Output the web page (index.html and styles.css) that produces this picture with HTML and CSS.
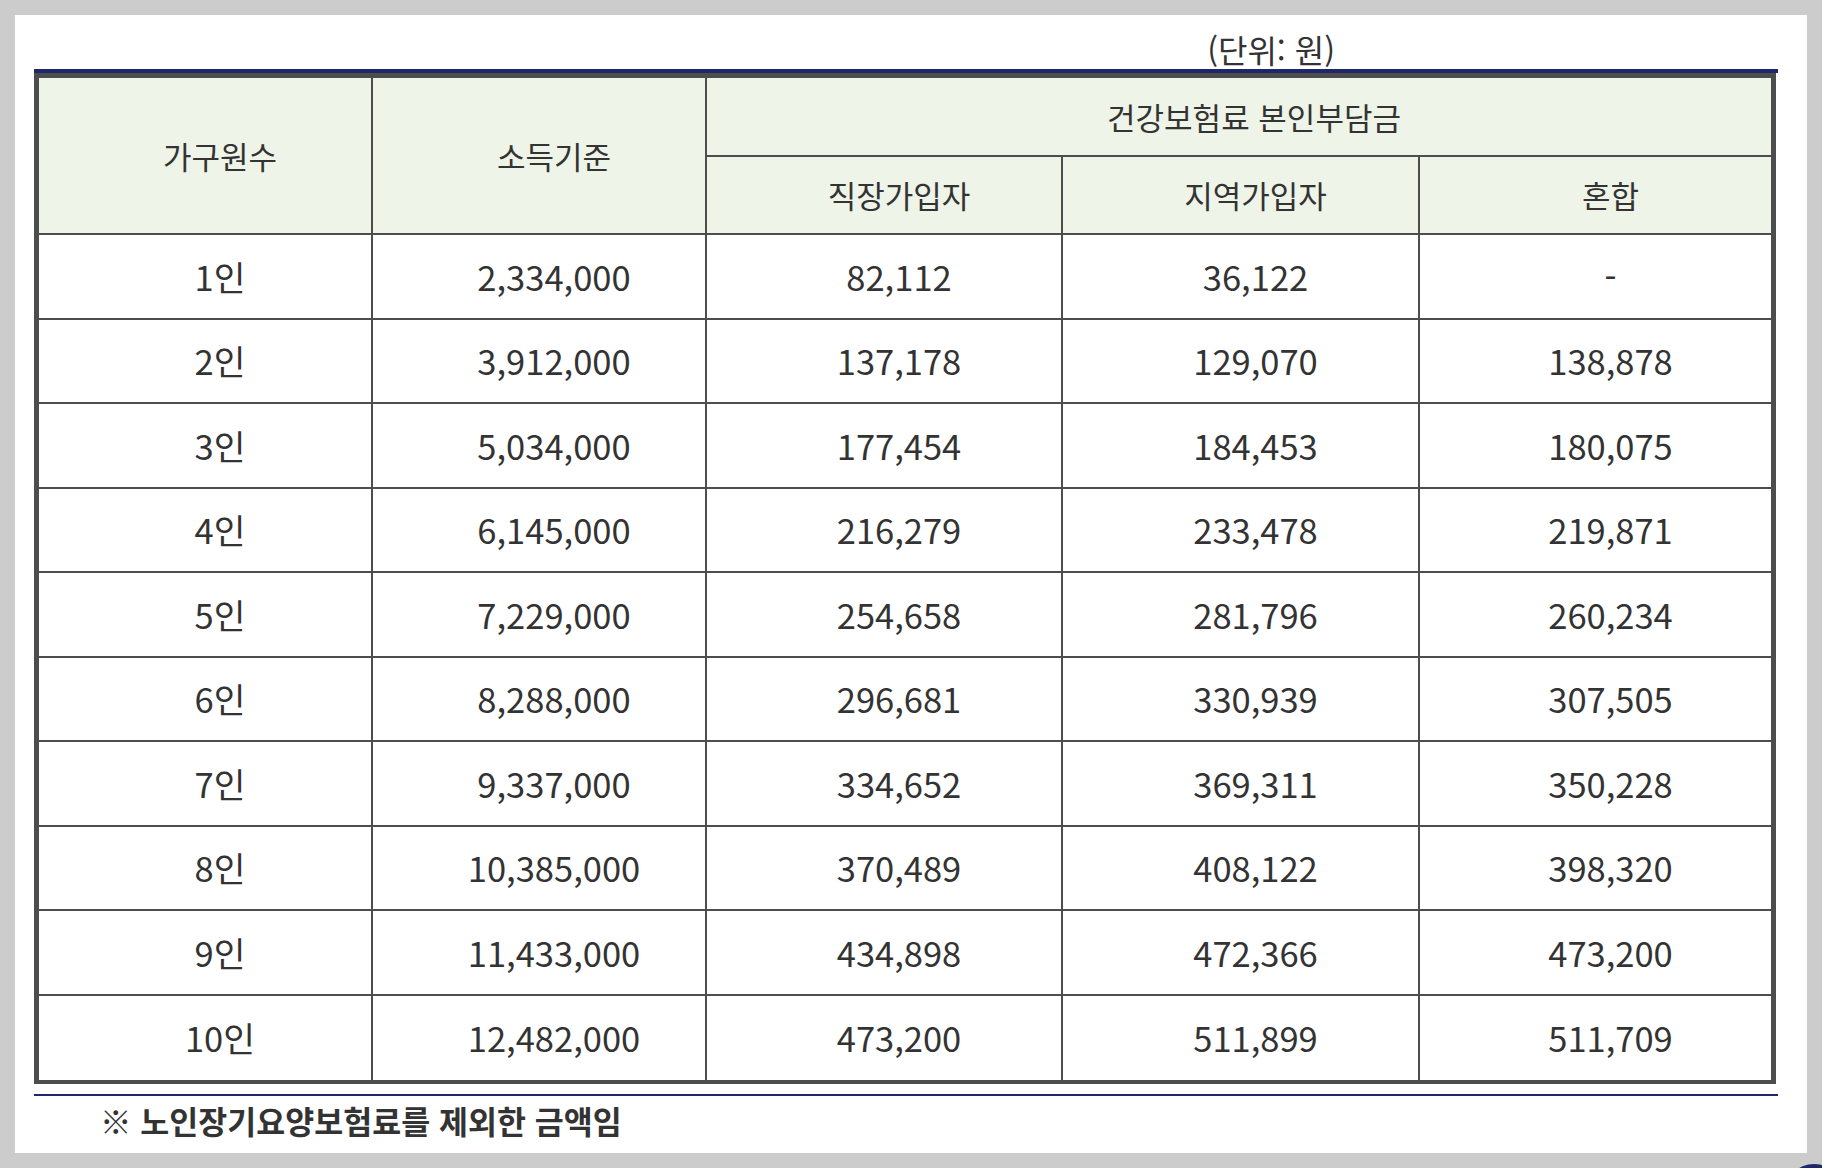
FILE: index.html
```html
<!DOCTYPE html>
<html lang="ko">
<head>
<meta charset="utf-8">
<title>건강보험료 본인부담금</title>
<link rel="stylesheet" href="styles.css">
</head>
<body>
<div class="page">
  <div class="unit">(단위: 원)</div>
  <div class="table-wrap">
    <table class="fee">
      <colgroup>
        <col class="c1"><col class="c2"><col class="c3"><col class="c4"><col class="c5">
      </colgroup>
      <thead>
        <tr class="h1">
          <th rowspan="2">가구원수</th>
          <th rowspan="2">소득기준</th>
          <th colspan="3" class="last">건강보험료 본인부담금</th>
        </tr>
        <tr class="h2">
          <th>직장가입자</th>
          <th>지역가입자</th>
          <th class="last">혼합</th>
        </tr>
      </thead>
      <tbody>
        <tr><td>1인</td><td>2,334,000</td><td>82,112</td><td>36,122</td><td class="last">-</td></tr>
        <tr><td>2인</td><td>3,912,000</td><td>137,178</td><td>129,070</td><td class="last">138,878</td></tr>
        <tr><td>3인</td><td>5,034,000</td><td>177,454</td><td>184,453</td><td class="last">180,075</td></tr>
        <tr><td>4인</td><td>6,145,000</td><td>216,279</td><td>233,478</td><td class="last">219,871</td></tr>
        <tr><td>5인</td><td>7,229,000</td><td>254,658</td><td>281,796</td><td class="last">260,234</td></tr>
        <tr><td>6인</td><td>8,288,000</td><td>296,681</td><td>330,939</td><td class="last">307,505</td></tr>
        <tr><td>7인</td><td>9,337,000</td><td>334,652</td><td>369,311</td><td class="last">350,228</td></tr>
        <tr><td>8인</td><td>10,385,000</td><td>370,489</td><td>408,122</td><td class="last">398,320</td></tr>
        <tr><td>9인</td><td>11,433,000</td><td>434,898</td><td>472,366</td><td class="last">473,200</td></tr>
        <tr><td>10인</td><td>12,482,000</td><td>473,200</td><td>511,899</td><td class="last">511,709</td></tr>
      </tbody>
    </table>
  </div>
  <p class="note">※ 노인장기요양보험료를 제외한 금액임</p>
</div>
<div class="fab"></div>
</body>
</html>
```

FILE: styles.css
```css
html, body {
  margin: 0;
  padding: 0;
}

body {
  background: #cccccc;
  font-family: "Noto Sans CJK KR", "Noto Sans", sans-serif;
  color: #333333;
  overflow: hidden;
  height: 1168px;
}

.page {
  box-sizing: border-box;
  width: 1792px;
  height: 1138px;
  margin: 15px 0 0 15px;
  padding: 14px 29px 0 19px;
  background: #ffffff;
}

.unit {
  height: 40px;
  line-height: 40px;
  font-size: 32px;
  text-align: right;
  padding-right: 443px;
  color: #333333;
}

.table-wrap {
  border-top: 4px solid #1f276b;
  border-bottom: 2px solid #1f276b;
  padding-bottom: 10px;
}

.fee {
  width: 1742px;
  table-layout: fixed;
  border-collapse: separate;
  border-spacing: 0;
  border: 5px solid #4d4d4d;
  border-bottom-width: 4px;
}

.c1 { width: 334px; }
.c2 { width: 334px; }
.c3 { width: 356px; }
.c4 { width: 357px; }
.c5 { width: 351px; }

.fee th,
.fee td {
  padding: 0 0 0 30px;
  text-align: center;
  vertical-align: middle;
  border-right: 2px solid #4d4d4d;
  border-bottom: 2px solid #4d4d4d;
  line-height: 1.2;
  color: #333333;
}

.fee th {
  background: #eef4e7;
  font-weight: 400;
  font-size: 31px;
}

.fee td {
  font-size: 34.5px;
}

.fee .last {
  border-right: 0;
}

.fee tbody tr:last-child td {
  border-bottom: 0;
}

.h1 { height: 79px; }
.h2 { height: 78px; }

.fee tbody tr {
  height: 84.5px;
}

.note {
  margin: 3px 0 0 0;
  padding-left: 66px;
  font-size: 31.5px;
  line-height: 42px;
  font-weight: 700;
  color: #333333;
}

.fab {
  position: fixed;
  left: 1784px;
  top: 1164px;
  width: 60px;
  height: 60px;
  border-radius: 30px;
  background: #1f276b;
}
```
